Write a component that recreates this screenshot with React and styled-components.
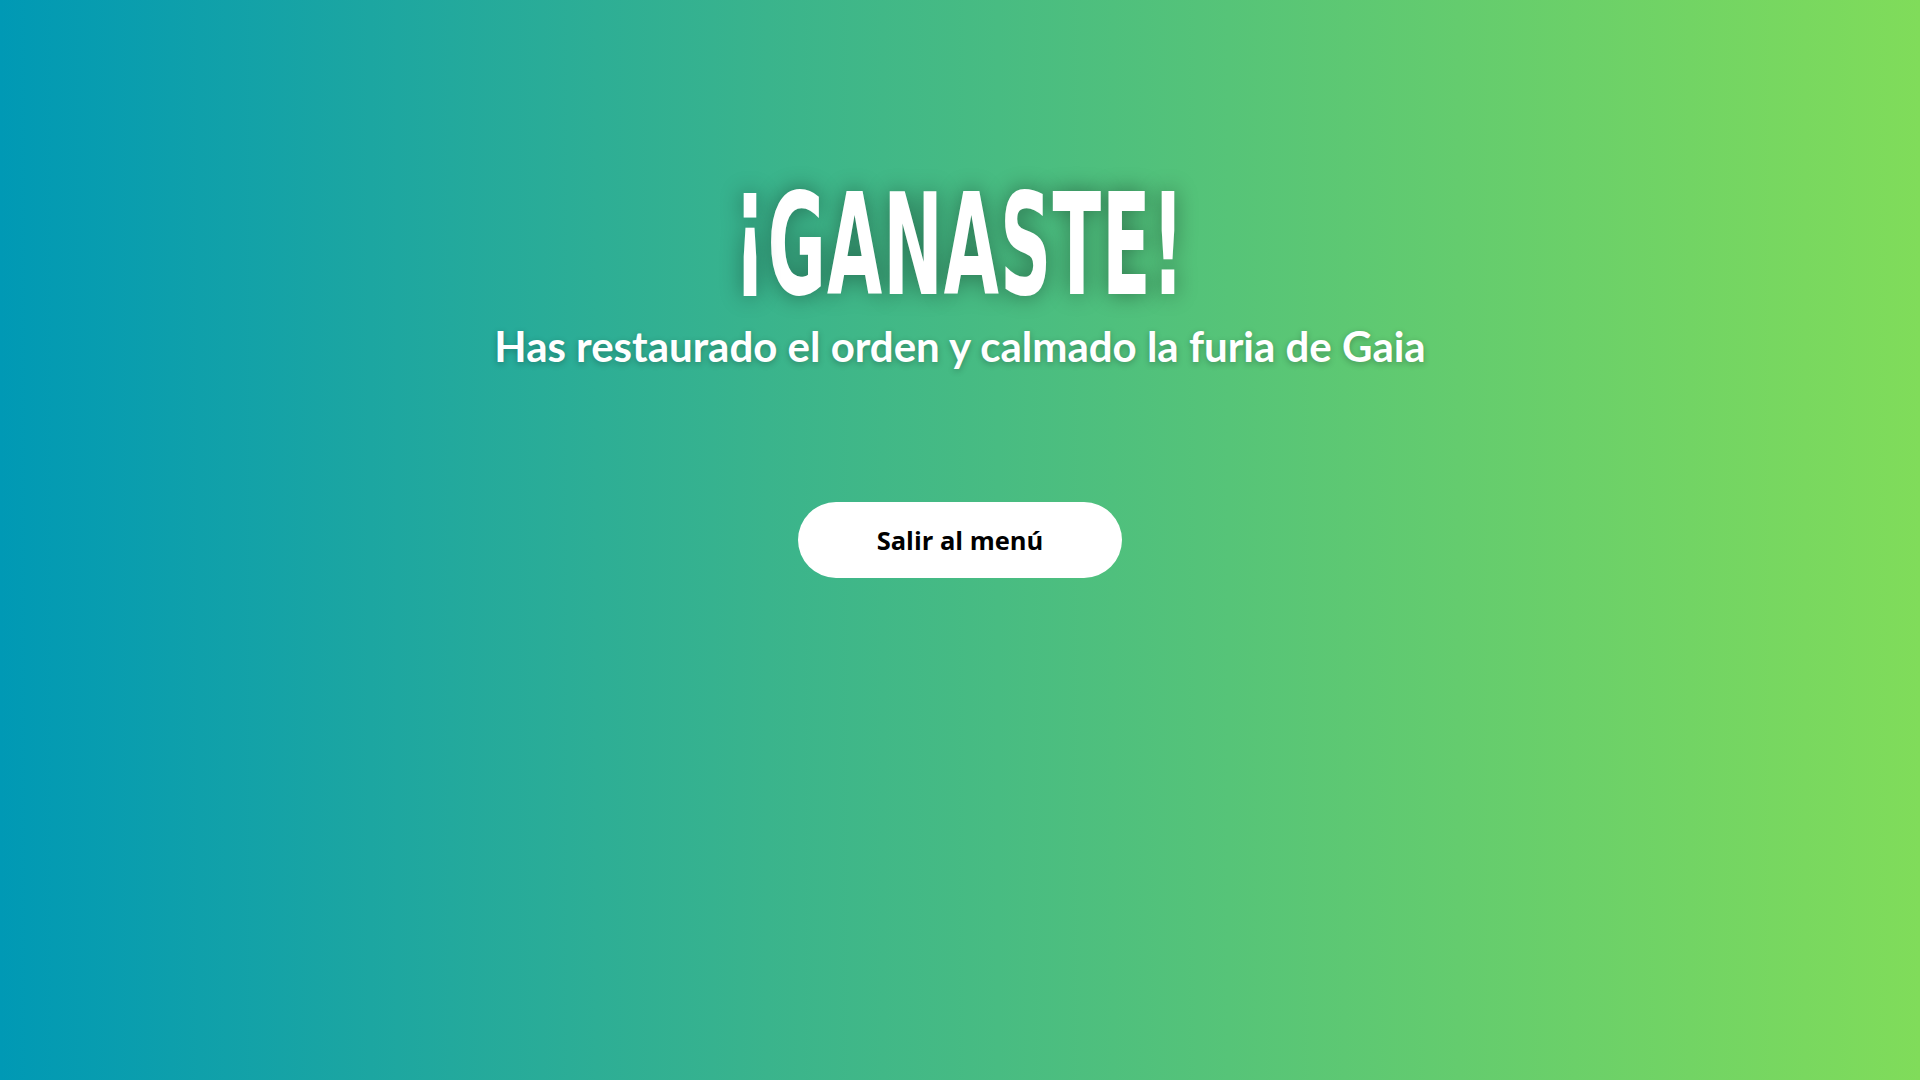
import React from 'react';
import styled, { createGlobalStyle } from 'styled-components';

const GlobalStyle = createGlobalStyle`
  html, body {
    margin: 0;
    padding: 0;
  }
  body {
    font-family: "Lato", "Open Sans", sans-serif;
  }
`;

const VictoryScreen = styled.main`
  width: 100vw;
  height: 100vh;
  background: linear-gradient(to right, #0099b5 0%, #3ab48c 40%, #80dc5a 100%);
  display: flex;
  flex-direction: column;
  align-items: center;
  padding-top: 176px;
  box-sizing: border-box;
  overflow: hidden;
`;

const Title = styled.h1`
  margin: 0;
  font-family: "DejaVu Sans Condensed", "DejaVu Sans", sans-serif;
  font-weight: 700;
  font-size: 140px;
  line-height: 1;
  color: #fff;
  letter-spacing: 2px;
  transform: scaleX(0.565);
  text-shadow: 0 0 30px rgba(0, 0, 0, 0.4);
`;

// Bebas-style inverted mark sits on the baseline, not below it
const InvertedMark = styled.span`
  display: inline-block;
  transform: translateY(-24px);
`;

const Subtitle = styled.p`
  margin: 5px 0 0;
  font-family: "Lato", sans-serif;
  font-weight: 700;
  font-size: 42px;
  color: #fff;
  text-shadow: 0 2px 6px rgba(0, 0, 0, 0.25);
`;

const MenuButton = styled.button`
  margin-top: 131px;
  width: 324px;
  height: 76px;
  border: none;
  border-radius: 38px;
  background: #fff;
  color: #000;
  font-family: "Open Sans", sans-serif;
  font-weight: 700;
  font-size: 25.5px;
  cursor: pointer;
`;

export default function App() {
  return (
    <>
      <GlobalStyle />
      <VictoryScreen>
        <Title>
          <InvertedMark>¡</InvertedMark>GANASTE!
        </Title>
        <Subtitle>Has restaurado el orden y calmado la furia de Gaia</Subtitle>
        <MenuButton>Salir al menú</MenuButton>
      </VictoryScreen>
    </>
  );
}
